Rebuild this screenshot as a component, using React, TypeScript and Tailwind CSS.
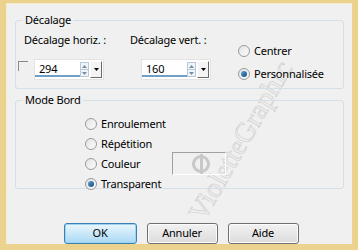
import React from 'react';

const font = { fontFamily: '"Noto Sans", "Open Sans", Arial, sans-serif' };

const Spin = ({ value }: { value: string }) => (
  <div className="flex items-stretch h-[21px] w-[70px] bg-white border border-[#e3e3e3]">
    <div className="relative flex-1 flex items-center pl-[4px] text-black">
      {value}
      <div className="absolute left-0 right-0 bottom-[2px] h-[2px] bg-[#6ea0c8]" />
    </div>
    <div className="w-[9px] my-[2px] flex flex-col border border-[#b9c9d8] bg-[#eef4fa]">
      <div className="flex-1 flex items-center justify-center border-b border-[#b9c9d8]">
        <svg width="5" height="3" viewBox="0 0 5 3"><path d="M0 3 L2.5 0 L5 3 Z" fill="#7a8ea3" /></svg>
      </div>
      <div className="flex-1 flex items-center justify-center">
        <svg width="5" height="3" viewBox="0 0 5 3"><path d="M0 0 L5 0 L2.5 3 Z" fill="#7a8ea3" /></svg>
      </div>
    </div>
    <div className="w-[12px] ml-[1px] my-[1px] mr-[1px] flex items-center justify-center bg-[#f4f4f4] border-r border-b border-[#6b6b6b] border-t border-l border-t-white border-l-white">
      <svg width="5" height="3" viewBox="0 0 5 3"><path d="M0 0 L5 0 L2.5 3 Z" fill="#000" /></svg>
    </div>
  </div>
);

const Radio = ({ checked, label }: { checked?: boolean; label: string }) => (
  <div className="flex items-center gap-[4px] h-[20px] text-black">
    <div className="w-[12px] h-[12px] rounded-full border border-[#9a9a9a] bg-gradient-to-br from-[#e4e4e4] to-[#fbfbfb] flex items-center justify-center">
      {checked && <div className="w-[6px] h-[6px] rounded-full bg-gradient-to-br from-[#5fa4d6] to-[#0e4c7d]" />}
    </div>
    <span>{label}</span>
  </div>
);

const Btn = ({ label, primary }: { label: string; primary?: boolean }) => (
  <button
    className={
      primary
        ? 'w-[73px] h-[21px] rounded-[3px] border border-[#3c7fb1] bg-gradient-to-b from-[#eaf6fd] to-[#a7d9f5] text-black shadow-[inset_0_0_0_1px_#9ed4f2]'
        : 'w-[71px] h-[21px] rounded-[3px] border border-[#707070] bg-gradient-to-b from-[#f2f2f2] to-[#dcdcdc] text-black shadow-[inset_0_0_0_1px_#fcfcfc]'
    }
  >
    {label}
  </button>
);

export default function App() {
  return (
    <div style={font} className="w-[358px] h-[250px] bg-[#ebd28e] pt-[3px] pl-[6px] pr-[6px] pb-[6px] text-[11px] tracking-[-0.2px]">
      <div className="relative h-full bg-[#f0f0f0] border-t border-l border-[#f7edc8] px-[8px] pt-[8px] overflow-hidden">
        {/* watermark */}
        <div
          className="absolute left-[189px] top-[200px] -rotate-[60deg] origin-left text-[28px] leading-none text-[#eeeeee] [-webkit-text-stroke:0.6px_#cfcfcf] whitespace-nowrap pointer-events-none tracking-normal"
          style={{ fontFamily: '"Liberation Serif", serif' }}
        >
          VioletteGraphic
        </div>

        {/* Décalage */}
        <fieldset className="relative border border-[#d5dfe5] rounded-[3px] h-[77px] px-[2px] pb-[4px]">
          <legend className="ml-[5px] px-[2px] leading-[16px] text-black">Décalage</legend>
          <div className="flex">
            <div className="flex flex-col w-[112px]">
              <div className="ml-[6px] mt-[4px] leading-[16px] text-black">Décalage horiz. :</div>
              <div className="flex items-start mt-[11px]">
                <div className="w-[10px] h-[10px] border-t border-l border-[#8a8a8a] mr-[6px] mt-[2px]" />
                <Spin value="294" />
              </div>
            </div>
            <div className="flex flex-col w-[108px]">
              <div className="mt-[4px] leading-[16px] text-black">Décalage vert. :</div>
              <div className="flex items-center mt-[11px] ml-[11px]">
                <Spin value="160" />
              </div>
            </div>
            <div className="flex flex-col mt-[13px] gap-[3px]">
              <Radio label="Centrer" />
              <Radio label="Personnalisée" checked />
            </div>
          </div>
        </fieldset>

        {/* Mode Bord */}
        <fieldset className="relative mt-[3px] border border-[#d5dfe5] rounded-[3px] h-[97px] px-[2px]">
          <legend className="ml-[5px] px-[2px] leading-[16px] text-black">Mode Bord</legend>
          <div className="flex flex-col ml-[67px] mt-[6px]">
            <Radio label="Enroulement" />
            <Radio label="Répétition" />
            <div className="flex items-center">
              <div className="w-[87px]">
                <Radio label="Couleur" />
              </div>
              <div className="relative w-[54px] h-[23px] -mt-[3px] -mb-[1px] border-t border-l border-[#a0a0a0] border-r border-b border-r-white border-b-white">
                <div className="absolute left-[19px] top-[2px] w-[18px] h-[18px] rounded-full border-[3px] border-[#c8c8c8]">
                  <div className="absolute left-[5px] top-[-4px] w-[3px] h-[20px] bg-[#c8c8c8]" />
                </div>
              </div>
            </div>
            <Radio label="Transparent" checked />
          </div>
        </fieldset>

        <div className="flex justify-center gap-[10px] mt-[34px] pl-[3px]">
          <Btn label="OK" primary />
          <Btn label="Annuler" />
          <Btn label="Aide" />
        </div>
      </div>
    </div>
  );
}
